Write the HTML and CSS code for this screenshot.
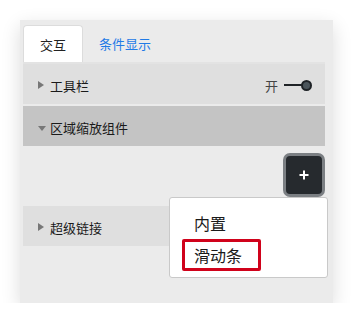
FILE: index.html
```html
<!DOCTYPE html>
<html lang="zh">
<head>
<meta charset="utf-8">
<link rel="stylesheet" href="styles.css">
</head>
<body>
<div class="panel">
  <div class="tabs">
    <div class="tab active">交互</div>
    <div class="tab link">条件显示</div>
  </div>
  <div class="row light">
    <span class="tri-right"></span>
    <span class="label">工具栏</span>
    <span class="toggle">
      <span class="toggle-text">开</span>
      <span class="toggle-line"></span>
      <span class="toggle-knob"></span>
    </span>
  </div>
  <div class="row dark">
    <span class="tri-down"></span>
    <span class="label">区域缩放组件</span>
  </div>
  <div class="content">
    <div class="add-wrap">
      <button class="add-btn" aria-label="添加">
        <svg width="10" height="10" viewBox="0 0 10 10"><path d="M5 0.5V9.5M0.5 5H9.5" stroke="#ffffff" stroke-width="2"/></svg>
      </button>
      <div class="menu">
        <div class="menu-item">内置</div>
        <div class="menu-item selected">滑动条</div>
      </div>
    </div>
  </div>
  <div class="row light">
    <span class="tri-right"></span>
    <span class="label">超级链接</span>
  </div>
</div>
</body>
</html>
```

FILE: styles.css
```css
html, body {
  margin: 0;
  padding: 0;
  background: #ffffff;
  font-family: "Noto Sans CJK SC", "Noto Sans", sans-serif;
}

.panel {
  margin: 20px 0 0 20px;
  width: 313px;
  height: 283px;
  box-sizing: border-box;
  padding: 5px 8px 0 3px;
  background: #ebebeb;
  box-shadow: 0 6px 18px rgba(0, 0, 0, 0.14);
}

.tabs {
  display: flex;
  border-bottom: 2px solid #e3e3e3;
}

.tab {
  height: 37px;
  box-sizing: border-box;
  padding: 0 16px;
  display: flex;
  align-items: center;
  font-size: 13px;
  color: #222;
}

.tab.active {
  background: #ffffff;
  border: 1px solid #dcdcdc;
  border-bottom: none;
  border-radius: 4px 4px 0 0;
}

.tab.link {
  color: #1f7ae6;
}

.row {
  height: 40px;
  display: flex;
  align-items: center;
  padding: 2px 13px 0 15px;
  box-sizing: border-box;
  font-size: 13px;
  color: #1a1a1a;
}

.row + .row {
  margin-top: 2px;
}

.row.light {
  background: #dfdfdf;
}

.row.dark {
  background: #c4c4c4;
}

.tri-right {
  width: 0;
  height: 0;
  border-left: 6px solid #777;
  border-top: 4px solid transparent;
  border-bottom: 4px solid transparent;
  margin-right: 6px;
}

.tri-down {
  width: 0;
  height: 0;
  border-top: 5px solid #777;
  border-left: 4px solid transparent;
  border-right: 4px solid transparent;
  margin-right: 4px;
  margin-top: 2px;
}

.label {
  flex: 1;
}

.toggle {
  display: flex;
  align-items: center;
}

.toggle-text {
  font-size: 13px;
  color: #444;
  margin-right: 6px;
}

.toggle-line {
  width: 18px;
  height: 2px;
  background: #1f2326;
}

.toggle-knob {
  width: 7px;
  height: 7px;
  border-radius: 50%;
  background: #4b555b;
  border: 2px solid #1e2226;
  margin-left: -1px;
}

.content {
  display: flex;
  justify-content: flex-end;
  padding: 7px 0 9px;
}

.add-wrap {
  position: relative;
}

.add-btn {
  display: flex;
  align-items: center;
  justify-content: center;
  width: 42px;
  height: 44px;
  box-sizing: border-box;
  border: 3px solid #7b7f83;
  border-radius: 7px;
  background: #262a2e;
  padding: 0;
}

.add-btn svg {
  display: block;
}

.menu {
  position: absolute;
  top: 100%;
  right: -3px;
  width: 159px;
  height: 81px;
  box-sizing: border-box;
  padding-top: 9px;
  background: #ffffff;
  border: 1px solid #c9c9c9;
  border-radius: 3px;
  z-index: 2;
}

.menu-item {
  margin-left: 12px;
  width: 79px;
  height: 32px;
  box-sizing: border-box;
  border: 3px solid transparent;
  border-radius: 2px;
  padding-left: 9px;
  display: flex;
  align-items: center;
  font-size: 16px;
  color: #1a1a1a;
}

.menu-item.selected {
  border-color: #d0021b;
}
```
